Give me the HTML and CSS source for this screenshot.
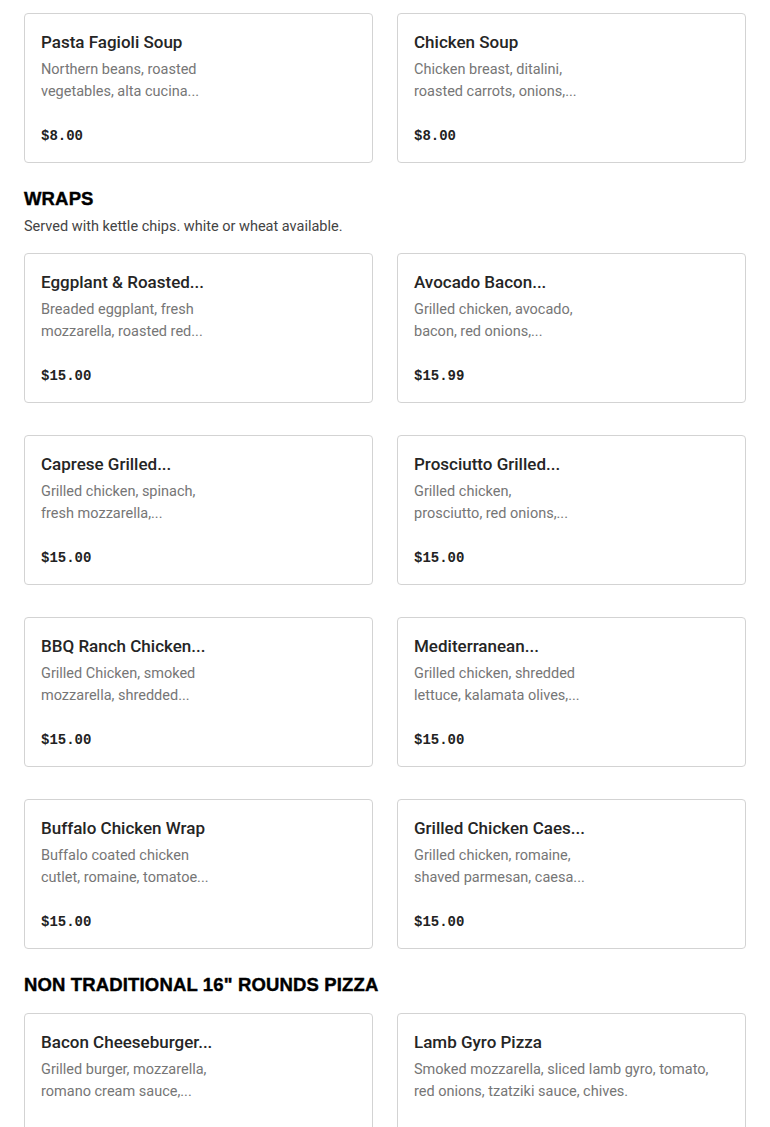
FILE: index.html
```html
<!DOCTYPE html>
<html>
<head>
<meta charset="utf-8">
<link rel="stylesheet" href="styles.css">
</head>
<body>
<main class="menu">
  <section class="section first">
    <div class="grid">
      <div class="card">
        <div class="title">Pasta Fagioli Soup</div>
        <div class="desc"><span>Northern beans, roasted</span><span>vegetables, alta cucina...</span></div>
        <div class="price">$8.00</div>
      </div>
      <div class="card">
        <div class="title">Chicken Soup</div>
        <div class="desc"><span>Chicken breast, ditalini,</span><span>roasted carrots, onions,...</span></div>
        <div class="price">$8.00</div>
      </div>
    </div>
  </section>

  <section class="section">
    <h2 class="heading">WRAPS</h2>
    <p class="subtitle">Served with kettle chips. white or wheat available.</p>
    <div class="grid">
      <div class="card">
        <div class="title">Eggplant &amp; Roasted...</div>
        <div class="desc"><span>Breaded eggplant, fresh</span><span>mozzarella, roasted red...</span></div>
        <div class="price">$15.00</div>
      </div>
      <div class="card">
        <div class="title">Avocado Bacon...</div>
        <div class="desc"><span>Grilled chicken, avocado,</span><span>bacon, red onions,...</span></div>
        <div class="price">$15.99</div>
      </div>
      <div class="card">
        <div class="title">Caprese Grilled...</div>
        <div class="desc"><span>Grilled chicken, spinach,</span><span>fresh mozzarella,...</span></div>
        <div class="price">$15.00</div>
      </div>
      <div class="card">
        <div class="title">Prosciutto Grilled...</div>
        <div class="desc"><span>Grilled chicken,</span><span>prosciutto, red onions,...</span></div>
        <div class="price">$15.00</div>
      </div>
      <div class="card">
        <div class="title">BBQ Ranch Chicken...</div>
        <div class="desc"><span>Grilled Chicken, smoked</span><span>mozzarella, shredded...</span></div>
        <div class="price">$15.00</div>
      </div>
      <div class="card">
        <div class="title">Mediterranean...</div>
        <div class="desc"><span>Grilled chicken, shredded</span><span>lettuce, kalamata olives,...</span></div>
        <div class="price">$15.00</div>
      </div>
      <div class="card">
        <div class="title">Buffalo Chicken Wrap</div>
        <div class="desc"><span>Buffalo coated chicken</span><span>cutlet, romaine, tomatoe...</span></div>
        <div class="price">$15.00</div>
      </div>
      <div class="card">
        <div class="title">Grilled Chicken Caes...</div>
        <div class="desc"><span>Grilled chicken, romaine,</span><span>shaved parmesan, caesa...</span></div>
        <div class="price">$15.00</div>
      </div>
    </div>
  </section>

  <section class="section">
    <h2 class="heading">NON TRADITIONAL 16" ROUNDS PIZZA</h2>
    <div class="grid">
      <div class="card">
        <div class="title">Bacon Cheeseburger...</div>
        <div class="desc"><span>Grilled burger, mozzarella,</span><span>romano cream sauce,...</span></div>
        <div class="price">$18.00</div>
      </div>
      <div class="card">
        <div class="title">Lamb Gyro Pizza</div>
        <div class="desc"><span>Smoked mozzarella, sliced lamb gyro, tomato,</span><span>red onions, tzatziki sauce, chives.</span></div>
        <div class="price">$18.00</div>
      </div>
    </div>
  </section>
</main>
</body>
</html>
```

FILE: styles.css
```css
* { box-sizing: border-box; }
html, body { margin: 0; padding: 0; background: #fff; }
body {
  font-family: Roboto, "Liberation Sans", sans-serif;
  color: #222;
}
.menu {
  padding: 13px 24px 0 24px;
}
.section { margin-top: 24px; }
.section.first { margin-top: 0; }
.heading {
  margin: 0;
  font-family: "Liberation Sans", Arial, sans-serif;
  font-weight: 900;
  font-size: 18.5px;
  line-height: 24px;
  color: #000;
  letter-spacing: 0.15px;
  -webkit-text-stroke: 0.4px #000;
}
.subtitle {
  margin: 5px 0 0 0;
  font-size: 14.5px;
  line-height: 22px;
  color: #444;
}
.heading + .grid { margin-top: 16px; }
.subtitle + .grid { margin-top: 15px; }
.grid {
  display: grid;
  grid-template-columns: 1fr 1fr;
  column-gap: 24px;
  row-gap: 32px;
}
.card {
  height: 150px;
  border: 1px solid #d3d3d3;
  border-radius: 4px;
  padding: 16px 16px 16px 16px;
  display: flex;
  flex-direction: column;
}
.title {
  font-size: 17px;
  font-weight: 500;
  line-height: 24px;
  color: #252525;
  white-space: nowrap;
}
.desc {
  margin-top: 5px;
  font-size: 14.5px;
  line-height: 22px;
  color: #767676;
  display: flex;
  flex-direction: column;
}
.desc span { white-space: nowrap; }
.price {
  margin-top: auto;
  font-family: "Liberation Mono", "Courier New", monospace;
  font-weight: 700;
  font-size: 14px;
  line-height: 20px;
  color: #222;
}
```
